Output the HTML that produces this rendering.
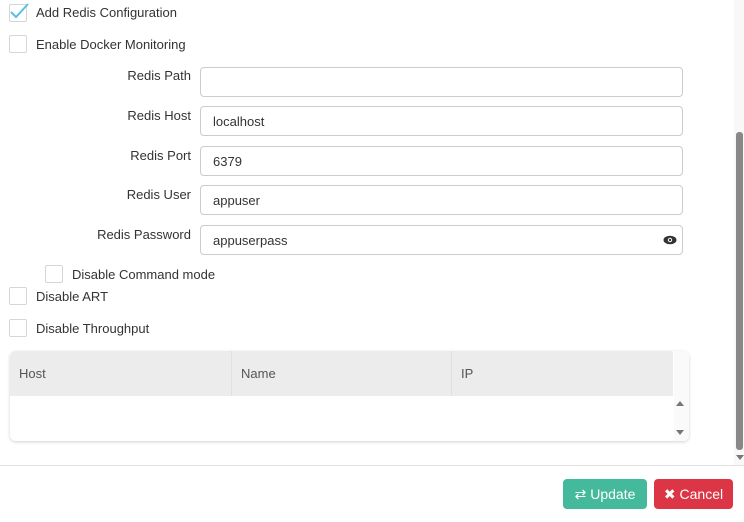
<!DOCTYPE html>
<html><head><style>
body{margin:0;width:744px;height:522px;position:relative;background:#fff;font-family:"Liberation Sans",sans-serif;font-size:13px;color:#333;overflow:hidden}
.a{position:absolute}
.cb{position:absolute;width:16px;height:16px;border:1px solid #d6d6d6;border-radius:2px;background:#fff}
.lbl{position:absolute;width:191px;text-align:right;left:0}
.in{position:absolute;left:200px;height:28px;border:1px solid #ccc;border-radius:4px;line-height:30px;padding-left:12px;box-sizing:content-box;width:469px}
.btn{position:absolute;top:479px;height:30px;border-radius:4px;color:#fff;font-size:14px;line-height:30px;text-align:center}
</style></head><body>
<div class="cb" style="left:9px;top:4px"></div>
<svg class="a" style="left:8px;top:1px" width="22" height="20"><path d="M3 11 L8 16 L20 3" stroke="#5bc0de" stroke-width="2" fill="none"/></svg>
<div class="a" style="left:36px;top:5px">Add Redis Configuration</div>
<div class="cb" style="left:9px;top:35px"></div>
<div class="a" style="left:36px;top:37px">Enable Docker Monitoring</div>

<div class="lbl" style="top:68px">Redis Path</div><div class="in" style="top:67px"></div>
<div class="lbl" style="top:108px">Redis Host</div><div class="in" style="top:106px">localhost</div>
<div class="lbl" style="top:148px">Redis Port</div><div class="in" style="top:146px">6379</div>
<div class="lbl" style="top:187px">Redis User</div><div class="in" style="top:185px">appuser</div>
<div class="lbl" style="top:227px">Redis Password</div><div class="in" style="top:225px">appuserpass</div>
<svg class="a" style="left:663px;top:235px" width="14" height="10"><ellipse cx="7" cy="5" rx="6.5" ry="4.3" fill="#333"/><circle cx="7" cy="5" r="2.2" fill="#fff"/><circle cx="7" cy="5" r="1.2" fill="#333"/></svg>

<div class="cb" style="left:45px;top:265px"></div>
<div class="a" style="left:72px;top:267px">Disable Command mode</div>
<div class="cb" style="left:9px;top:287px"></div>
<div class="a" style="left:36px;top:289px">Disable ART</div>
<div class="cb" style="left:9px;top:319px"></div>
<div class="a" style="left:36px;top:321px">Disable Throughput</div>

<div class="a" style="left:10px;top:351px;width:679px;height:90px;border-radius:6px;box-shadow:0 1px 3px rgba(0,0,0,.18);background:#fff;overflow:hidden">
 <div class="a" style="left:0;top:0;width:663px;height:45px;background:#ececec"></div>
 <div class="a" style="left:221px;top:0;width:1px;height:45px;background:#e0e0e0"></div>
 <div class="a" style="left:441px;top:0;width:1px;height:45px;background:#e0e0e0"></div>
 <div class="a" style="left:9px;top:15px;color:#555">Host</div>
 <div class="a" style="left:231px;top:15px;color:#555">Name</div>
 <div class="a" style="left:451px;top:15px;color:#555">IP</div>
 <div class="a" style="left:664px;top:0;width:15px;height:90px;background:#fafafa"></div>
 <div class="a" style="left:666px;top:50px;width:0;height:0;border:4px solid transparent;border-bottom:5px solid #777;border-top:0"></div>
 <div class="a" style="left:666px;top:79px;width:0;height:0;border:4px solid transparent;border-top:5px solid #777;border-bottom:0"></div>
</div>

<div class="a" style="left:734px;top:0;width:10px;height:465px;background:#f8f8f8"></div>
<div class="a" style="left:736px;top:132px;width:7px;height:318px;background:#888;border-radius:3px"></div>
<div class="a" style="left:736px;top:455px;width:0;height:0;border:4px solid transparent;border-top:5px solid #777;border-bottom:0"></div>

<div class="a" style="left:0;top:465px;width:744px;height:1px;background:#e2e2e2"></div>
<div class="btn" style="left:563px;width:84px;background:#45b99b">⇄ Update</div>
<div class="btn" style="left:654px;width:79px;background:#dc3545">✖ Cancel</div>
</body></html>
